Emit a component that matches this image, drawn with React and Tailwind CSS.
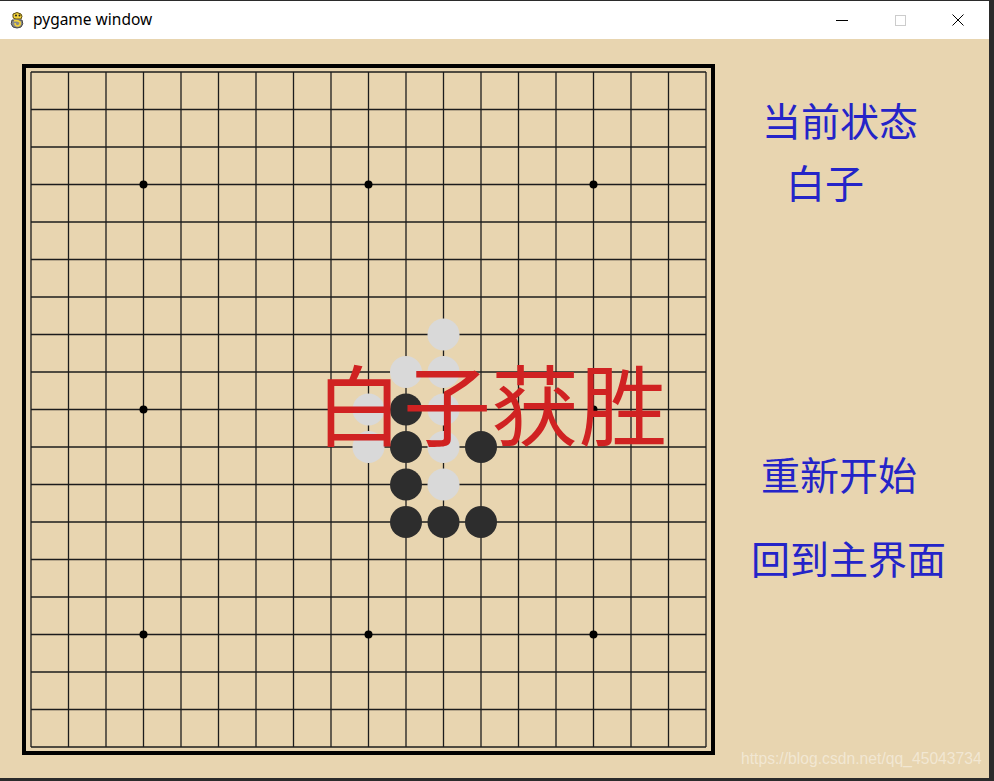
import React from "react";

const X0 = 31;
const Y0 = 33;
const S = 37.5;
const LINES = Array.from({ length: 19 }, (_, i) => i);
const STARS = [
  [3, 3], [9, 3], [15, 3],
  [3, 9], [9, 9], [15, 9],
  [3, 15], [9, 15], [15, 15],
];
const BLACK = [[10, 9], [10, 10], [12, 10], [10, 11], [10, 12], [11, 12], [12, 12]];
const WHITE = [[11, 7], [10, 8], [11, 8], [9, 9], [11, 9], [9, 10], [11, 10], [11, 11]];

const cjk = { fontFamily: '"Noto Sans CJK SC", "Noto Sans", sans-serif' };

function PygameIcon() {
  return (
    <svg width="19" height="19" viewBox="0 0 19 19">
      <path d="M5 3 Q9 0 13 3 Q15 5 13 8 L8 8 Q5 8 5 6 Z" fill="#f2d23a" stroke="#5a4a10" strokeWidth="1" />
      <circle cx="8" cy="4.5" r="1" fill="#222" />
      <circle cx="11.5" cy="4.5" r="1" fill="#222" />
      <path d="M4 9 Q2 13 5 16 Q9 18 13 16 Q16 13 14 9 Z" fill="#8a8a8a" stroke="#444" strokeWidth="1" />
      <path d="M6 10 Q9 9 12 11 Q13 14 10 15 Q7 15 7 12" fill="none" stroke="#f2d23a" strokeWidth="1.6" />
    </svg>
  );
}

function Board() {
  const end = 18 * S;
  return (
    <svg width="730" height="739" viewBox="0 0 730 739" className="shrink-0 block">
      <rect x="24" y="27" width="689" height="687" fill="none" stroke="#000" strokeWidth="4" />
      {LINES.map((i) => (
        <g key={i}>
          <line x1={X0 + S * i} y1={Y0} x2={X0 + S * i} y2={Y0 + end} stroke="#1c1c1c" strokeWidth="1.3" />
          <line x1={X0} y1={Y0 + S * i} x2={X0 + end} y2={Y0 + S * i} stroke="#1c1c1c" strokeWidth="1.3" />
        </g>
      ))}
      {STARS.map(([c, r]) => (
        <circle key={`s${c}-${r}`} cx={X0 + S * c} cy={Y0 + S * r} r="4" fill="#000" />
      ))}
      {WHITE.map(([c, r]) => (
        <circle key={`w${c}-${r}`} cx={X0 + S * c} cy={Y0 + S * r} r="16" fill="#d9d9d9" />
      ))}
      {BLACK.map(([c, r]) => (
        <circle key={`b${c}-${r}`} cx={X0 + S * c} cy={Y0 + S * r} r="16" fill="#2d2d2d" />
      ))}
    </svg>
  );
}

export default function App() {
  return (
    <div className="w-[994px] h-[781px] bg-[#2b2b2b] pt-px pr-[5px] pb-[3px] flex flex-col">
      {/* title bar */}
      <div className="h-[38px] bg-white flex items-center shrink-0">
        <div className="ml-[8px] flex items-center">
          <PygameIcon />
        </div>
        <span
          className="ml-[6px] text-[15.5px] text-black"
          style={{ fontFamily: '"Noto Sans", "Liberation Sans", sans-serif' }}
        >
          pygame window
        </span>
        <div className="ml-auto mr-[2px] flex h-full">
          <div className="w-[58px] flex items-center justify-center">
            <div className="w-[12px] h-px bg-black" />
          </div>
          <div className="w-[58px] flex items-center justify-center">
            <div className="w-[11px] h-[11px] border border-[#cccccc]" />
          </div>
          <div className="w-[58px] flex items-center justify-center">
            <svg width="12" height="12" viewBox="0 0 12 12">
              <path d="M0.5 0.5 L11.5 11.5 M11.5 0.5 L0.5 11.5" stroke="#000" strokeWidth="1" />
            </svg>
          </div>
        </div>
      </div>

      {/* game surface */}
      <div className="flex-1 bg-[#e8d5b0] relative flex">
        <div className="relative">
          <Board />
          <div
            className="absolute left-[315px] top-[318px] text-[88px] leading-none text-[#d02222] whitespace-nowrap"
            style={cjk}
          >
            白子获胜
          </div>
        </div>

        <div className="flex flex-col text-[39px] leading-none text-[#2424c8]" style={cjk}>
          <div className="mt-[61px] ml-[32px]">当前状态</div>
          <div className="mt-[23px] ml-[56px]">白子</div>
          <div className="mt-[253px] ml-[31px]">重新开始</div>
          <div className="mt-[45px] ml-[21px] whitespace-nowrap">回到主界面</div>
        </div>

        <div
          className="absolute left-[741px] top-[712px] text-[15.7px] leading-none text-white/45 whitespace-nowrap"
          style={{ fontFamily: '"Liberation Sans", Arial, sans-serif' }}
        >
          https://blog.csdn.net/qq_45043734
        </div>
      </div>
    </div>
  );
}
